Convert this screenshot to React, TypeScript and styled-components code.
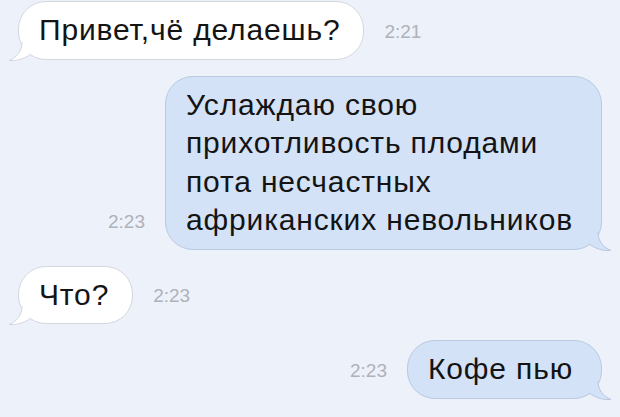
import React from "react"
import styled, { createGlobalStyle } from "styled-components"

const GlobalStyle = createGlobalStyle`
  html, body {
    margin: 0;
    padding: 0;
    background: #edf1f9;
  }
  body {
    font-family: "Liberation Sans", Arial, sans-serif;
    -webkit-font-smoothing: antialiased;
  }
`

type Side = "in" | "out"

const messages: { side: Side; time: string; text: string }[] = [
  { side: "in", time: "2:21", text: "Привет,чё делаешь?" },
  {
    side: "out",
    time: "2:23",
    text: "Услаждаю свою\nприхотливость плодами\nпота несчастных\nафриканских невольников",
  },
  { side: "in", time: "2:23", text: "Что?" },
  { side: "out", time: "2:23", text: "Кофе пью" },
]

const Tail = ({ side }: { side: Side }) => {
  const fill = side === "in" ? "#ffffff" : "#d3e2f7"
  const stroke = side === "in" ? "#d3d7de" : "#b9c9df"
  return (
    <TailSvg $side={side} width="24" height="20" viewBox="0 0 24 20">
      <path d="M14 0 C14 9 9 15 1 18.5 C9 19 16 17 23 12 L23 0 Z" fill={fill} />
      <path
        d="M14 0 C14 9 9 15 1 18.5 C9 19 16 17 23 12"
        fill="none"
        stroke={stroke}
        strokeWidth="1"
      />
    </TailSvg>
  )
}

const App = () => {
  return (
    <>
      <GlobalStyle />
      <Thread>
        {messages.map((m, i) => (
          <Row key={i} $side={m.side}>
            {m.side === "out" && <Time>{m.time}</Time>}
            <Bubble $side={m.side}>
              {m.text}
              <Tail side={m.side} />
            </Bubble>
            {m.side === "in" && <Time>{m.time}</Time>}
          </Row>
        ))}
      </Thread>
    </>
  )
}

export default App

const Thread = styled.div`
  width: 620px;
  height: 417px;
  box-sizing: border-box;
  padding: 1px 18px 0 18px;
  display: flex;
  flex-direction: column;
  gap: 16px;
  overflow: hidden;
`

const Row = styled.div<{ $side: Side }>`
  display: flex;
  align-items: flex-end;
  justify-content: ${p => (p.$side === "in" ? "flex-start" : "flex-end")};
  gap: 20px;
`

const Bubble = styled.div<{ $side: Side }>`
  position: relative;
  white-space: pre-line;
  font-size: 30px;
  letter-spacing: 0.85px;
  line-height: 38.5px;
  color: #141414;
  padding: 9px ${p => (p.$side === "in" ? "23px" : "28px")} 9px 20px;
  border-radius: 28px;
  background: ${p => (p.$side === "in" ? "#ffffff" : "#d3e2f7")};
  border: 1px solid ${p => (p.$side === "in" ? "#d3d7de" : "#b9c9df")};
`

const TailSvg = styled.svg<{ $side: Side }>`
  position: absolute;
  bottom: -3px;
  ${p =>
    p.$side === "in"
      ? "left: -11px;"
      : "right: -11px; transform: scaleX(-1);"}
`

const Time = styled.span`
  font-size: 19px;
  line-height: 20px;
  color: #aeb2ba;
  padding-bottom: 18px;
`
